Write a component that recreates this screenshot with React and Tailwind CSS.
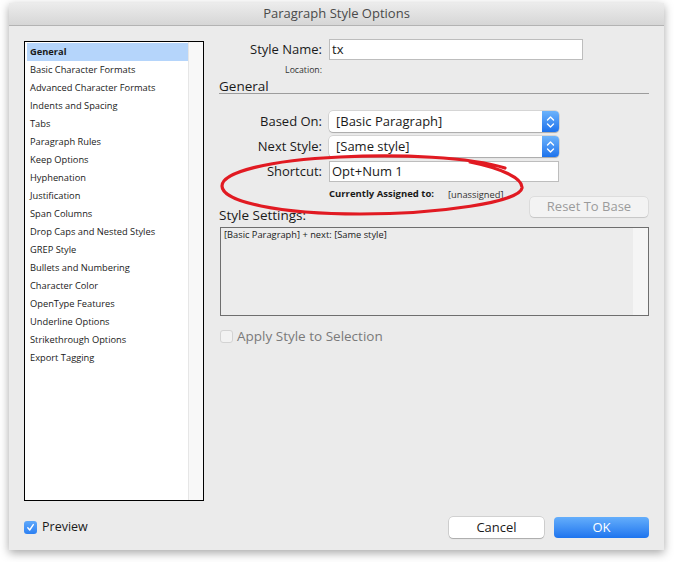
import React from "react";

const F = { fontFamily: '"Open Sans", "DejaVu Sans", sans-serif' };

const items = [
  "General",
  "Basic Character Formats",
  "Advanced Character Formats",
  "Indents and Spacing",
  "Tabs",
  "Paragraph Rules",
  "Keep Options",
  "Hyphenation",
  "Justification",
  "Span Columns",
  "Drop Caps and Nested Styles",
  "GREP Style",
  "Bullets and Numbering",
  "Character Color",
  "OpenType Features",
  "Underline Options",
  "Strikethrough Options",
  "Export Tagging",
];

function Stepper() {
  return (
    <div className="w-[17px] h-full rounded-r-[4px] bg-gradient-to-b from-[#6cb3fb] to-[#1c72ec] flex items-center justify-center">
      <svg width="9" height="14" viewBox="0 0 9 14" fill="none">
        <path d="M1.5 5 L4.5 2 L7.5 5" stroke="white" strokeWidth="1.4" strokeLinecap="round" strokeLinejoin="round" />
        <path d="M1.5 9 L4.5 12 L7.5 9" stroke="white" strokeWidth="1.4" strokeLinecap="round" strokeLinejoin="round" />
      </svg>
    </div>
  );
}

function Select({ value }) {
  return (
    <div className="h-[21px] w-[230px] flex rounded-[4px] bg-white shadow-[0_0_0_0.5px_rgba(0,0,0,0.18),0_1px_1px_rgba(0,0,0,0.2)]">
      <div className="flex-1 flex items-center pl-[7px] text-[13px] text-[#1a1a1a] leading-none">{value}</div>
      <Stepper />
    </div>
  );
}

export default function App() {
  return (
    <div className="w-[674px] h-[562px] bg-white relative overflow-hidden" style={F}>
      <div className="absolute left-[9px] top-[3px] w-[655px] h-[547px] bg-[#ebebeb] flex flex-col shadow-[0_3px_9px_rgba(0,0,0,0.35)]">
        {/* title bar */}
        <div className="h-[23px] shrink-0 bg-gradient-to-b from-[#ececec] to-[#d6d6d6] border-b border-[#b3b3b3] flex items-center justify-center text-[13px] text-[#4a4a4a]">
          Paragraph Style Options
        </div>
        {/* body */}
        <div className="flex flex-col px-[15px] pt-[15px]">
          <div className="flex gap-[15px] h-[460px]">
            {/* list */}
            <div className="w-[180px] h-full border border-black bg-white flex">
              <div className="flex-1 pl-[2px] pt-[1px]">
                {items.map((t, i) => (
                  <div
                    key={t}
                    className={
                      "h-[18px] flex items-center pl-[3px] text-[9.3px] text-[#1a1a1a] " +
                      (i === 0 ? "bg-[#b5d5fb] font-bold" : "")
                    }
                  >
                    {t}
                  </div>
                ))}
              </div>
              <div className="w-[15px] h-full bg-[#f8f8f8] border-l border-[#e6e6e6]" />
            </div>
            {/* right column */}
            <div className="w-[430px] flex flex-col">
              <div className="grid grid-cols-[103px_1fr] gap-x-[7px] items-center">
                <div className="text-right text-[13px] text-[#1a1a1a] leading-none mt-[-3px]">Style Name:</div>
                <div className="h-[21px] w-[254px] mt-[-2px] bg-white border border-[#bdbdbd] flex items-center pl-[2px] text-[13px] text-[#1a1a1a]">
                  tx
                </div>
                <div className="text-right text-[8.7px] text-[#333] mt-[6px] leading-none">Location:</div>
                <div />
              </div>
              <div className="mt-[5px] text-[13.5px] text-[#1a1a1a] leading-none pb-0 border-b border-[#9c9c9c]">General</div>
              <div className="grid grid-cols-[103px_1fr] gap-x-[7px] gap-y-[4px] items-center mt-[17px]">
                <div className="text-right text-[13px] text-[#1a1a1a]">Based On:</div>
                <Select value="[Basic Paragraph]" />
                <div className="text-right text-[13px] text-[#1a1a1a]">Next Style:</div>
                <Select value="[Same style]" />
                <div className="text-right text-[13px] text-[#1a1a1a]">Shortcut:</div>
                <div className="h-[21px] w-[230px] bg-white border border-[#bdbdbd] flex items-center pl-[2px] text-[13px] text-[#1a1a1a]">
                  Opt+Num 1
                </div>
              </div>
              <div className="flex mt-[6px]">
                <div className="w-[110px]" />
                <div className="flex flex-col flex-1">
                  <div className="flex items-center leading-none h-[12px]">
                    <span className="font-bold text-[9.5px] text-[#1a1a1a] w-[119px]">Currently Assigned to:</span>
                    <span className="text-[9.3px] text-[#333]">[unassigned]</span>
                  </div>
                  <div className="flex justify-end mt-[-3px] mr-[1px]">
                    <div className="w-[118px] h-[20px] rounded-[4px] bg-[#f3f3f3] shadow-[0_0_0_0.5px_rgba(0,0,0,0.12),0_1px_1px_rgba(0,0,0,0.1)] flex items-center justify-center text-[13px] text-[#9b9b9b]">
                      Reset To Base
                    </div>
                  </div>
                </div>
              </div>
              <div className="text-[13.5px] text-[#1a1a1a] leading-none mt-[-8px]">Style Settings:</div>
              <div className="mt-[4px] ml-[1px] h-[89px] w-[429px] border border-[#6e6e6e] bg-[#ececec] flex">
                <div className="flex-1 pl-[3px] pt-[1px] text-[9.3px] text-[#1a1a1a] leading-[12px]">
                  [Basic Paragraph] + next: [Same style]
                </div>
                <div className="w-[15px] h-full bg-[#f5f5f5]" />
              </div>
              <div className="flex items-center mt-[14px] ml-[1px]">
                <div className="w-[13px] h-[13px] rounded-[3px] bg-[#f2f2f2] border border-[#d3d3d3]" />
                <span className="ml-[4px] text-[13.5px] text-[#7a7a7a] leading-none">Apply Style to Selection</span>
              </div>
            </div>
          </div>
          {/* bottom row */}
          <div className="flex items-center mt-[16px] h-[21px]">
            <div className="w-[13px] h-[13px] rounded-[3px] bg-gradient-to-b from-[#5ea8fa] to-[#2c80f2] flex items-center justify-center">
              <svg width="9" height="9" viewBox="0 0 9 9" fill="none">
                <path d="M1.8 4.8 L3.7 7 L7.3 1.6" stroke="white" strokeWidth="1.4" strokeLinecap="round" strokeLinejoin="round" />
              </svg>
            </div>
            <span className="ml-[5px] text-[12.5px] text-[#1a1a1a]">Preview</span>
            <div className="flex-1" />
            <div className="w-[95px] h-[21px] rounded-[4px] bg-white shadow-[0_0_0_0.5px_rgba(0,0,0,0.22),0_1px_1px_rgba(0,0,0,0.18)] flex items-center justify-center text-[13px] text-[#1a1a1a]">
              Cancel
            </div>
            <div className="w-[95px] h-[21px] ml-[10px] rounded-[4px] bg-gradient-to-b from-[#64aefb] to-[#1d74ee] flex items-center justify-center text-[13px] text-white">
              OK
            </div>
          </div>
        </div>
      </div>
      {/* red annotation ellipse */}
      <svg className="absolute left-0 top-0 pointer-events-none" width="674" height="562" viewBox="0 0 674 562" fill="none">
        <path
          d="M505 168 C 470 157, 400 154, 340 157 C 270 160, 222 172, 222 186 C 222 202, 280 214, 360 214 C 440 214, 520 202, 522 188 C 523 178, 500 168, 470 162"
          stroke="#e11a22"
          strokeWidth="3.2"
          strokeLinecap="round"
        />
      </svg>
    </div>
  );
}
